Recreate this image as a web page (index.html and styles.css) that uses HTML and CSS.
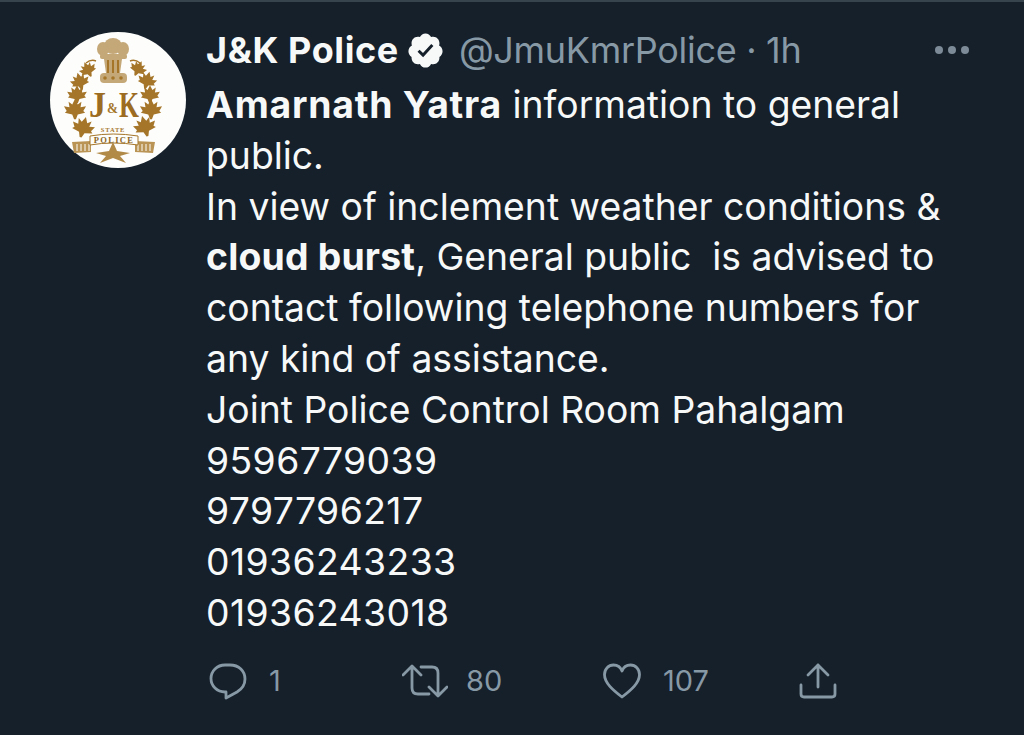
FILE: index.html
```html
<!DOCTYPE html>
<html lang="en">
<head>
<meta charset="utf-8">
<title>J&amp;K Police</title>
<link rel="stylesheet" href="styles.css">
</head>
<body>
<div class="topline"></div>
<article class="tweet">
  <div class="avatar">
    <svg viewBox="0 0 136 136" width="136" height="136">
      <defs>
        <path id="leaf" d="M0 -12 L3 -6 L7 -9 L6 -3 L12 -4 L9 1 L11 3 L3 5 L1 10 L-1 10 L-3 5 L-11 3 L-9 1 L-12 -4 L-6 -3 L-7 -9 L-3 -6 Z"/>
      </defs>
      <circle cx="68" cy="68" r="68" fill="#fdfdfb"/>
      <g fill="#a5762a">
        <use href="#leaf" transform="translate(38 38) rotate(-25) scale(.72)"/>
        <use href="#leaf" transform="translate(30 50) rotate(-15) scale(.8)"/>
        <use href="#leaf" transform="translate(27 63) scale(.82)"/>
        <use href="#leaf" transform="translate(25 78) scale(.92)"/>
        <use href="#leaf" transform="translate(33 96) rotate(15) scale(.95)"/>
        <use href="#leaf" transform="translate(88 37) rotate(25) scale(.72)"/>
        <use href="#leaf" transform="translate(97 49) rotate(15) scale(.8)"/>
        <use href="#leaf" transform="translate(100 63) scale(.82)"/>
        <use href="#leaf" transform="translate(101 78) scale(.92)"/>
        <use href="#leaf" transform="translate(95 95) rotate(-15) scale(.95)"/>
        <path d="M36 31q5-4 10-2M90 31q-5-4-10-2" fill="none" stroke="#a5762a" stroke-width="1.500"/>
      </g>
      <g fill="#c4a878">
        <ellipse cx="63" cy="14" rx="9" ry="8"/>
        <ellipse cx="53" cy="17" rx="6" ry="7"/>
        <ellipse cx="73" cy="17" rx="6" ry="7"/>
        <rect x="50" y="22" width="27" height="5" rx="2"/>
        <path d="M54 27h18l-2 14h-14z"/>
        <rect x="50" y="41" width="27" height="10" rx="4"/>
      </g>
      <g fill="#a5762a">
        <rect x="57" y="28" width="2" height="13"/>
        <rect x="62" y="28" width="2" height="13"/>
        <rect x="67" y="28" width="2" height="13"/>
        <circle cx="55" cy="46" r="1.800"/>
        <circle cx="63" cy="46" r="1.800"/>
        <circle cx="71" cy="46" r="1.800"/>
      </g>
      <text class="jk" x="39" y="85" textLength="17" lengthAdjust="spacingAndGlyphs">J</text>
      <text class="jk" x="69" y="85" textLength="20" lengthAdjust="spacingAndGlyphs">K</text>
      <text class="amp" x="57" y="81" textLength="11" lengthAdjust="spacingAndGlyphs">&amp;</text>
      <text class="state" x="63" y="100">STATE</text>
      <path d="M22 110 L41 109 V120 L24 121 Z M85 109 L105 110 L103 121 L85 120 Z" fill="#b99455"/>
      <path d="M27 112v7M31 112v7M35 112v7M39 112v7M88 112v7M92 112v7M96 112v7M100 112v7" stroke="#fdfdfb" stroke-width="1"/>
      <path d="M63 110 L67 119 L80 121 L70 124 L76 131 L63 126 L50 131 L56 124 L46 121 L59 119 Z" fill="#b28a48"/>
      <path d="M40 104 Q63 100 88 104 V113 Q63 109 40 113 Z" fill="#fdfdfb" stroke="#a5762a" stroke-width="1"/>
      <text class="police" x="64" y="111">POLICE</text>
    </svg>
  </div>
  <div class="content">
    <header class="meta">
      <span class="name">J&amp;K Police</span>
      <svg class="badge" viewBox="0 0 24 24" width="39" height="39">
        <path fill="#f7f9f9" d="M22.5 12.5c0-1.58-.875-2.95-2.148-3.6.154-.435.238-.905.238-1.4 0-2.21-1.71-3.998-3.818-3.998-.47 0-.92.084-1.336.25C14.818 2.415 13.51 1.5 12 1.5s-2.816.917-3.437 2.25c-.415-.165-.866-.25-1.336-.25-2.11 0-3.818 1.79-3.818 4 0 .494.083.964.237 1.4-1.272.65-2.147 2.018-2.147 3.6 0 1.495.782 2.798 1.942 3.486-.02.17-.032.34-.032.514 0 2.21 1.708 4 3.818 4 .47 0 .92-.086 1.335-.25.62 1.334 1.926 2.25 3.437 2.25 1.512 0 2.818-.916 3.437-2.25.415.163.865.248 1.336.248 2.11 0 3.818-1.79 3.818-4 0-.174-.012-.344-.033-.513 1.158-.687 1.943-1.99 1.943-3.484z"/>
        <path fill="#15202b" d="M10.54 16.2l-3.45-3.44 1.27-1.28 2.1 2.1 5.08-5.54 1.33 1.22z"/>
      </svg>
      <span class="handle">@JmuKmrPolice · 1h</span>
      <span class="more"><i></i><i></i><i></i></span>
    </header>
    <div class="body">
      <div><b class="wide">Amarnath Yatra</b> information to general</div>
      <div>public.</div>
      <div>In view of inclement weather conditions &amp;</div>
      <div><b>cloud burst</b>, General public&nbsp; is advised to</div>
      <div>contact following telephone numbers for</div>
      <div>any kind of assistance.</div>
      <div>Joint Police Control Room Pahalgam</div>
      <div class="num">9596779039</div>
      <div class="num">9797796217</div>
      <div class="num">01936243233</div>
      <div class="num">01936243018</div>
    </div>
    <footer class="actions">
      <div class="action act-reply">
        <svg viewBox="0 0 38 38" width="38" height="38" class="ico"><path d="M16 3h5c9 0 15 6 15 14 0 6-3 10-8 13l-11 6v-6h-1C8 30 2 24 2 16.500 2 9 8 3 16 3z"/></svg>
        <span>1</span>
      </div>
      <div class="action act-rt">
        <svg viewBox="0 0 46 38" width="46" height="38" class="ico"><path d="M1 13l9-9 9 9M10 5v21c0 4 2 6 6 6h11M19 5h11c4 0 6 2 6 6v22M27 25l9 9 9-9"/></svg>
        <span>80</span>
      </div>
      <div class="action act-like">
        <svg viewBox="0 0 38 38" width="38" height="38" class="ico"><path d="M19 35C10 28 1.500 21 1.500 12.500 1.500 7 5.500 3 10.500 3 14 3 17.500 5 19 9c1.500-4 5-6 8.500-6 5 0 9 4 9 9.500C36.500 21 28 28 19 35z"/></svg>
        <span>107</span>
      </div>
      <div class="action act-share">
        <svg viewBox="0 0 38 38" width="38" height="38" class="ico"><path d="M19 25V3M9 13L19 3l10 10M2 23v9c0 2 1 3 3 3h28c2 0 3-1 3-3v-9"/></svg>
      </div>
    </footer>
  </div>
</article>
</body>
</html>
```
FILE: styles.css
```css
* { box-sizing: border-box; }
html, body { margin: 0; height: 100%; }
body {
  width: 1024px;
  height: 735px;
  overflow: hidden;
  background: #15202b;
  color: #f7f9f9;
  font-family: Inter, "Liberation Sans", sans-serif;
}
.topline { height: 2px; background: #38444d; }
.tweet {
  display: flex;
  gap: 20px;
  padding: 30px 0 0 50px;
}
.avatar { flex: none; width: 136px; height: 136px; }
.avatar svg { display: block; }
.jk { font: 700 36px "Liberation Serif", serif; fill: #9c6c22; }
.amp { font: 700 15px "Liberation Serif", serif; fill: #a5762a; }
.state { font: 700 6.500px "Liberation Serif", serif; fill: #a5762a; text-anchor: middle; letter-spacing: .8px; }
.police { font: 700 8.500px "Liberation Serif", serif; fill: #8a6424; text-anchor: middle; letter-spacing: 1.300px; }
.content { flex: 1; min-width: 0; }
.meta {
  display: flex;
  align-items: center;
  height: 40px;
  margin-top: -2px;
}
.name { font-size: 36px; font-weight: 700; letter-spacing: .6px; }
.badge { margin-left: 7px; flex: none; }
.handle { margin-left: 14px; font-size: 36px; color: #8899a6; letter-spacing: -.3px; }
.more { display: flex; gap: 5px; margin-left: 134px; }
.more i { width: 8px; height: 8px; border-radius: 50%; background: #7d8b98; }
.body { margin-top: 10px; font-size: 37.300px; line-height: 50.800px; white-space: nowrap; }
.body b { font-weight: 700; letter-spacing: .2px; }
.body b.wide { letter-spacing: .8px; }
.num { letter-spacing: .4px; }
.actions {
  display: flex;
  align-items: center;
  margin-top: 23px;
  color: #8899a6;
  font-size: 29px;
}
.action { display: flex; align-items: center; }
.act-reply { width: 193px; gap: 22px; margin-left: 3px; }
.act-rt { width: 201px; gap: 18px; }
.act-like { width: 196px; gap: 22px; }
.ico { fill: none; stroke: #8899a6; stroke-width: 2.800; stroke-linecap: round; stroke-linejoin: round; flex: none; }
```
